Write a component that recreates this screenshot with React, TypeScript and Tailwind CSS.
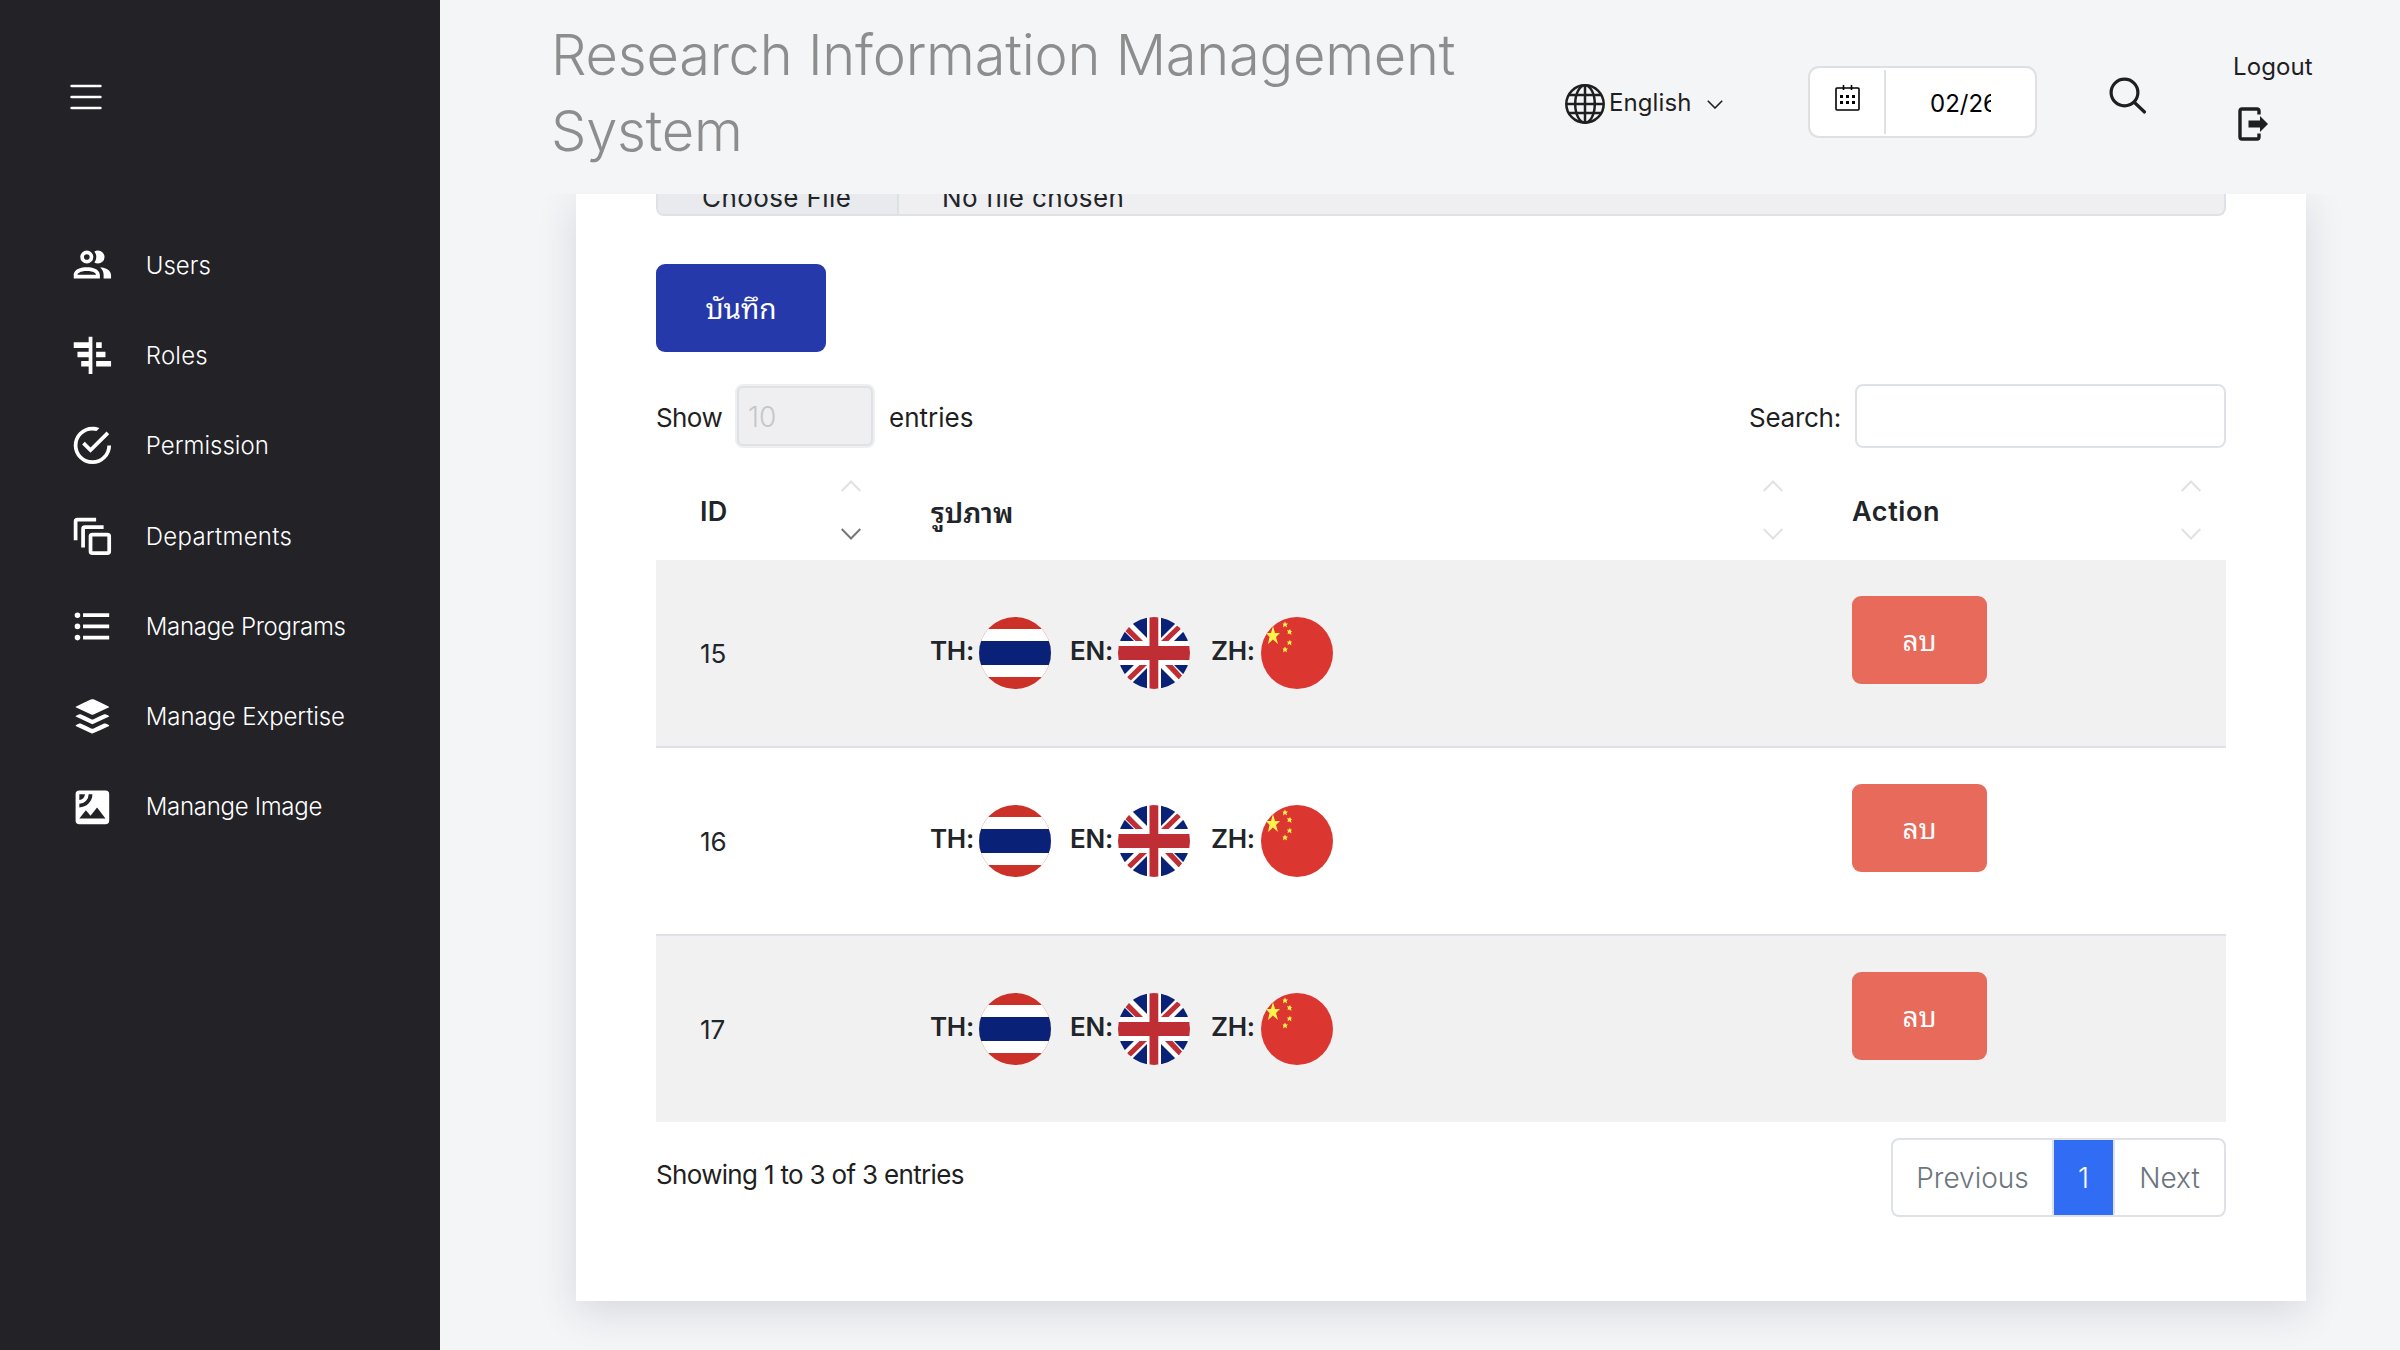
import React from 'react';

const NAV = [
  { label: 'Users', ls: 'tracking-[0px]', d: 'M13.07 10.41A5 5 0 0 0 13.07 4.59A3.39 3.39 0 0 1 15 4A3.5 3.5 0 0 1 15 11A3.39 3.39 0 0 1 13.07 10.41M5.5 7.5A3.5 3.5 0 1 1 9 11A3.5 3.5 0 0 1 5.5 7.5M7.5 7.5A1.5 1.5 0 1 0 9 6A1.5 1.5 0 0 0 7.5 7.5M16 17V19H2V17S2 13 9 13 16 17 16 17M14 17C13.86 16.22 12.67 15 9 15S4.07 16.31 4 17M15.95 13A5.32 5.32 0 0 1 18 17V19H22V17S22 13.37 15.94 13Z' },
  { label: 'Roles', ls: 'tracking-[0.2px]', d: 'M10 2h2v20h-2v-4H6v-3h4v-2H4v-3h6V8H2V5h8ZM14 5h3v3h-3ZM14 10h5v3h-5ZM14 15h8v3h-8Z' },
  { label: 'Permission', ls: 'tracking-[0px]', d: 'M20,12A8,8 0 0,1 12,20A8,8 0 0,1 4,12A8,8 0 0,1 12,4C12.76,4 13.5,4.11 14.2,4.31L15.77,2.74C14.61,2.26 13.34,2 12,2A10,10 0 0,0 2,12A10,10 0 0,0 12,22A10,10 0 0,0 22,12M7.91,10.08L6.5,11.5L11,16L21,6L19.59,4.58L11,13.17L7.91,10.08Z' },
  { label: 'Departments', ls: 'tracking-[0.25px]', d: 'M4 2H14V4H4V14H2V4A2 2 0 0 1 4 2M8 6H18V8H8V18H6V8A2 2 0 0 1 8 6M12 10H20A2 2 0 0 1 22 12V20A2 2 0 0 1 20 22H12A2 2 0 0 1 10 20V12A2 2 0 0 1 12 10M12 12V20H20V12Z' },
  { label: 'Manage Programs', ls: 'tracking-[-0.3px]', d: 'M7,5H21V7H7V5M7,13V11H21V13H7M4,4.5A1.5,1.5 0 0,1 5.5,6A1.5,1.5 0 0,1 4,7.5A1.5,1.5 0 0,1 2.5,6A1.5,1.5 0 0,1 4,4.5M4,10.5A1.5,1.5 0 0,1 5.5,12A1.5,1.5 0 0,1 4,13.5A1.5,1.5 0 0,1 2.5,12A1.5,1.5 0 0,1 4,10.5M7,19V17H21V19H7M4,16.5A1.5,1.5 0 0,1 5.5,18A1.5,1.5 0 0,1 4,19.5A1.5,1.5 0 0,1 2.5,18A1.5,1.5 0 0,1 4,16.5Z' },
  { label: 'Manage Expertise', ls: 'tracking-[-0.1px]', d: 'M12.6,2.86C15.27,4.1 18,5.39 20.66,6.63C20.81,6.7 21,6.75 21,6.95C21,7.15 20.81,7.19 20.66,7.26C18,8.5 15.3,9.77 12.62,11C12.21,11.21 11.79,11.21 11.38,11C8.69,9.76 6,8.5 3.32,7.25C3.18,7.19 3,7.14 3,6.94C3,6.76 3.18,6.71 3.31,6.65C6,5.39 8.74,4.1 11.44,2.85C11.73,2.72 12.3,2.73 12.6,2.86M12,21.15C11.8,21.15 11.66,21.07 11.38,20.97C8.69,19.73 6,18.47 3.33,17.22C3.19,17.15 3,17.11 3,16.9C3,16.7 3.19,16.66 3.34,16.59C3.78,16.38 4.23,16.17 4.67,15.96C5.12,15.76 5.56,15.76 6,15.97C7.79,16.8 9.57,17.63 11.35,18.46C11.79,18.67 12.23,18.66 12.67,18.46C14.45,17.62 16.23,16.79 18,15.96C18.44,15.76 18.87,15.75 19.29,15.95C19.77,16.16 20.24,16.39 20.71,16.61C20.78,16.64 20.85,16.68 20.91,16.73C21.04,16.83 21.04,17 20.91,17.08C20.83,17.14 20.74,17.19 20.65,17.23C18,18.5 15.33,19.72 12.66,20.95C12.46,21.05 12.19,21.15 12,21.15M12,16.17C11.9,16.17 11.55,16.07 11.36,16C8.68,14.74 6,13.5 3.34,12.24C3.2,12.18 3,12.13 3,11.93C3,11.72 3.2,11.68 3.35,11.61C3.8,11.39 4.25,11.18 4.7,10.97C5.13,10.78 5.56,10.78 6,11C7.78,11.82 9.58,12.66 11.38,13.5C11.79,13.69 12.21,13.69 12.63,13.5C14.43,12.65 16.23,11.81 18.04,10.97C18.45,10.78 18.87,10.78 19.29,10.97C19.76,11.19 20.24,11.41 20.71,11.63C20.77,11.66 20.84,11.69 20.9,11.74C21.04,11.85 21.04,12 20.89,12.12C20.84,12.16 20.77,12.19 20.71,12.22C18,13.5 15.31,14.75 12.61,16C12.42,16.09 12.08,16.17 12,16.17Z' },
  { label: 'Manange Image', ls: 'tracking-[-0.3px]', d: 'M5,18L8.5,13.5L11,16.5L14.5,12L19,18M5,12V10A5,5 0 0,0 10,5H12A7,7 0 0,1 5,12M5,5H8A3,3 0 0,1 5,8M19,3H5A2,2 0 0,0 3,5V19A2,2 0 0,0 5,21H19A2,2 0 0,0 21,19V5A2,2 0 0,0 19,3Z' },
];

function Sidebar() {
  return (
    <aside className="w-[440px] shrink-0 bg-[#222227] text-white">
      <div className="h-[220px] pt-[84px] pl-[70px]">
        <svg width="32" height="26" viewBox="0 0 32 26" stroke="currentColor" strokeWidth="2.6" strokeLinecap="round">
          <path d="M1.6 2H30.4M1.6 13H30.4M1.6 24H30.4" />
        </svg>
      </div>
      <nav>
        {NAV.map((n) => (
          <a key={n.label} className="flex h-[90.3px] items-center pl-[69.5px]">
            <svg className="size-[44.8px] shrink-0" viewBox="0 0 24 24" fill="currentColor" fillRule="evenodd">
              <path d={n.d} />
            </svg>
            <span className={'ml-[31.5px] mt-px whitespace-nowrap text-[24px] font-light ' + n.ls}>{n.label}</span>
          </a>
        ))}
      </nav>
    </aside>
  );
}

function Header() {
  return (
    <header className="relative z-10 flex h-[194px] bg-[#f4f5f7] pl-[111px] text-[#1f1f1f]">
      <h1 className="mt-[17px] w-[960px] shrink-0 text-[56px] font-[350] leading-[76px] tracking-[-0.25px] text-[#8d8d8d]">
        Research Information Management
        <br />
        System
      </h1>
      <div className="ml-[54px] mt-[84px] flex h-10 w-[160px] shrink-0 items-center whitespace-nowrap">
        <svg className="size-10 shrink-0" viewBox="0 0 40 40" fill="none" stroke="currentColor" strokeWidth="2.5">
          <circle cx="20" cy="20" r="18.7" />
          <ellipse cx="20" cy="20" rx="9.8" ry="18.7" />
          <path d="M20 1V39M1 20H39M3.5 11H36.5M3.5 29H36.5" />
        </svg>
        <span className="-mt-[2px] ml-[4px] text-[24px] tracking-[0.1px]">English</span>
        <svg className="ml-[15px] shrink-0" width="16" height="9" viewBox="0 0 16 9" fill="none" stroke="currentColor" strokeWidth="1.6">
          <path d="M.8 .8L8 8L15.2 .8" />
        </svg>
      </div>
      <div className="ml-[83px] mt-[66px] flex h-[72px] w-[229px] shrink-0 rounded-[11px] border-2 border-[#dee0e2] bg-white text-black">
        <div className="my-[2px] flex w-[76px] items-start justify-center border-r-2 border-[#dee2e6] pt-[15px]">
          <svg width="25" height="26" viewBox="0 0 25 26" fill="none" stroke="currentColor" strokeWidth="1.6">
            <rect x="1" y="3" width="23" height="22" rx="1" />
            <path d="M8.5 0V5M16.5 0V5" />
            <path d="M5 11.5H20M5 17.500H20" strokeWidth="3" strokeDasharray="3 3" />
          </svg>
        </div>
        <div className="ml-[44px] mt-[18px] h-[36px] w-[61px] overflow-hidden whitespace-nowrap text-[24px] leading-[36px]">02/26/2025</div>
      </div>
      <svg className="ml-[72px] mt-[77px] shrink-0" width="38" height="38" viewBox="0 0 38 38" fill="none" stroke="currentColor" strokeWidth="3.2" strokeLinecap="round">
        <circle cx="15.5" cy="15.5" r="13.4" />
        <path d="M25.500 25.500L35.500 35" />
      </svg>
      <div className="ml-[86px] mt-[50px] flex w-[90px] flex-col whitespace-nowrap">
        <span className="text-[24px] leading-[34px] tracking-[0.1px]">Logout</span>
        <svg className="ml-[5px] mt-[23px]" width="32" height="34" viewBox="0 0 32 34" fill="none" stroke="currentColor" strokeWidth="3.4">
          <path d="M21 7.500V4Q21 2 19 2H4Q2 2 2 4V30Q2 32 4 32H19Q21 32 21 30V26.500" />
          <path d="M10.500 13.5H22V9L30 17L22 25V20.500H10.500Z" fill="currentColor" stroke="none" />
        </svg>
      </div>
    </header>
  );
}

function Sort({ desc = false }: { desc?: boolean }) {
  return (
    <svg className="-mt-[2px]" width="20" height="60" viewBox="0 0 20 60" fill="none" strokeWidth="2" stroke="#e1e1e1">
      <path d="M.7 11L10 1.500L19.300 11" />
      <path d="M.7 49L10 58.500L19.300 49" stroke={desc ? '#777777' : '#e1e1e1'} />
    </svg>
  );
}

function Flag({ kind, id }: { kind: string; id: string }) {
  return (
    <svg className="size-[72px] shrink-0" viewBox="0 0 72 72">
      <clipPath id={id}>
        <circle cx="36" cy="36" r="36" />
      </clipPath>
      <g clipPath={'url(#' + id + ')'}>
        {kind === 'TH' && (
          <>
            <rect width="72" height="72" fill="#cc3129" />
            <rect y="12" width="72" height="48" fill="#fff" />
            <rect y="24" width="72" height="24" fill="#0a2178" />
          </>
        )}
        {kind === 'EN' && (
          <>
            <rect width="72" height="72" fill="#fff" />
            <path
              fill="#0a2178"
              d="M8 0H29V21ZM0 8L16 24H0ZM64 0H43V21ZM72 8L56 24H72ZM8 72H29V51ZM0 64L16 48H0ZM64 72H43V51ZM72 64L56 48H72Z"
            />
            <path
              fill="#bf2e34"
              d="M0 7L17.500 24H25L4 3ZM68 0L43 24H50.500L72 3ZM4 72L29 48H21.500L0 69ZM72 67L54.500 48H47L68 70Z"
            />
            <path fill="#bf2e34" d="M31.500 0H40.300V72H31.500ZM0 29H72V43H0Z" />
          </>
        )}
        {kind === 'ZH' && (
          <>
            <rect width="72" height="72" fill="#db362f" />
            <g fill="#fff34d">
              <path d="M12 9L14 16H19L15 20L17 27L12 22.500L7 27L8.500 20L5 16H10Z" />
              <path d="M24 4.500L25 6.500H27L25.500 8L26 10.500L24 9L22 10.500L22.500 8L21.500 6.500H23Z" />
              <path d="M29 12L30 14H31L30 15.500L30.500 18L28.500 16.500L26.500 17L27 15L26 13L28 13.500Z" />
              <path d="M29 22.500L29.500 24.500H31L30 26L30.500 28.500L28.500 27L26.500 28L27 26L26 24.500H28Z" />
              <path d="M24 29.500L25 31.500H27L25.500 33L26 35.500L24 34L22 35.500L22.500 33L21.500 31.500H23Z" />
            </g>
          </>
        )}
      </g>
    </svg>
  );
}

const COLS = 'grid grid-cols-[230px_922px_418px]';

const HEADS = [
  { text: 'ID', cls: 'tracking-[0.2px]' },
  { text: 'รูปภาพ', cls: 'text-[28px] pl-px' },
  { text: 'Action', cls: 'tracking-[0.6px]' },
];

const LANGS = [
  { code: 'TH', cls: 'w-[140px] pr-[19px]' },
  { code: 'EN', cls: 'w-[141px] pr-[21px]' },
  { code: 'ZH', cls: 'w-[142px] pr-[20px]' },
];

const ROWS = [
  { id: '15', cls: 'h-[188px] border-b-2 bg-[#f1f1f1]' },
  { id: '16', cls: 'h-[188px] border-b-2 bg-white' },
  { id: '17', cls: 'h-[186px] bg-[#f1f1f1]' },
];

export default function App() {
  return (
    <div className="flex h-[1350px] w-[2400px] overflow-hidden bg-[#f4f5f7] font-['Inter','Noto_Sans_Thai_Looped','Noto_Looped_Thai','Loma','Garuda','Noto_Serif_Thai',sans-serif] text-[#212529]">
      <Sidebar />
      <div className="flex min-w-0 flex-1 flex-col">
        <Header />
        <main className="ml-[136px] h-[1107px] w-[1730px] bg-white px-[80px] shadow-[0_10px_38px_rgba(31,45,61,0.14)]">
          <div className="flex h-[22px] w-[1570px] items-end overflow-hidden rounded-b-[8px] border-2 border-t-0 border-[#dee2e6] bg-[#efeff1] text-[26px]">
            <div className="flex h-[40px] w-[241px] shrink-0 items-end border-r-2 border-[#dee2e6] bg-[#e9eaee] pl-[44px]">
              <span className="mb-[2px] whitespace-nowrap leading-[28px] tracking-[0.4px]">Choose File</span>
            </div>
            <span className="mb-[2px] ml-[43px] whitespace-nowrap leading-[28px] tracking-[0.35px]">No file chosen</span>
          </div>
          <button className="mt-[48px] flex h-[88px] w-[170px] items-center justify-center rounded-[9px] bg-[#2639ab] pt-[2px] text-[28px] text-white">บันทึก</button>
          <div className="mt-[32px] flex h-[64px] items-center text-[26px] text-[#1f1f1f]">
            <span className="mt-[2px] w-[79px] whitespace-nowrap tracking-[-0.6px]">Show</span>
            <div className="flex h-[64px] w-[140px] items-center rounded-[8px] border-2 border-[#efeff1] bg-[#efeff1]">
              <div className="flex size-full items-center rounded-[6px] border-2 border-[#dee2e6] pl-[9px] pt-[2px] text-[28px] font-light text-[#c4c6c9]">10</div>
            </div>
            <span className="ml-[14px] mt-[2px] whitespace-nowrap">entries</span>
            <span className="ml-auto mt-[2px] whitespace-nowrap tracking-[-0.25px]">Search:</span>
            <div className="ml-[14px] h-[64px] w-[371px] rounded-[8px] border-2 border-[#dee2e6] bg-white" />
          </div>
          <div className={COLS + ' h-[112px] text-[27px] font-semibold'}>
            {HEADS.map((h, i) => (
              <div key={h.text} className="flex items-center justify-between pl-[44px] pr-[25px] pt-[14px]">
                <span className={'mt-[3px] ' + h.cls}>{h.text}</span>
                <Sort desc={i === 0} />
              </div>
            ))}
          </div>
          {ROWS.map((r) => (
            <div key={r.id} className={COLS + ' border-[#dee2e6] ' + r.cls}>
              <div className="pl-[44px] pt-[76px] text-[26px] leading-[36px]">{r.id}</div>
              <div className="flex pl-[44px] pt-[57px] text-[26px] font-semibold">
                {LANGS.map((l) => (
                  <div key={l.code} className={'flex shrink-0 justify-between ' + l.cls}>
                    <span className="mt-[16px] leading-[36px] tracking-[-0.3px]">{l.code}:</span>
                    <Flag kind={l.code} id={l.code + r.id} />
                  </div>
                ))}
              </div>
              <div className="pl-[44px] pt-[36px]">
                <button className="flex h-[88px] w-[135px] items-center justify-center rounded-[9px] bg-[#e76a5b] pt-[2px] text-[28px] text-white">ลบ</button>
              </div>
            </div>
          ))}
          <div className="mt-[16px] flex items-start justify-between">
            <span className="mt-[19px] text-[26px] leading-[36px] tracking-[-0.68px] text-[#1f1f1f]">Showing 1 to 3 of 3 entries</span>
            <div className="flex h-[79px] items-stretch overflow-hidden rounded-[8px] border-2 border-[#dee2e6] text-[28px] font-light text-[#6c757d]">
              <span className="flex w-[161px] items-center justify-center border-r-2 border-[#dee2e6]">Previous</span>
              <span className="flex w-[59px] items-center justify-center bg-[#306df4] text-white">1</span>
              <span className="flex w-[111px] items-center justify-center border-l-2 border-[#dee2e6]">Next</span>
            </div>
          </div>
        </main>
      </div>
    </div>
  );
}
